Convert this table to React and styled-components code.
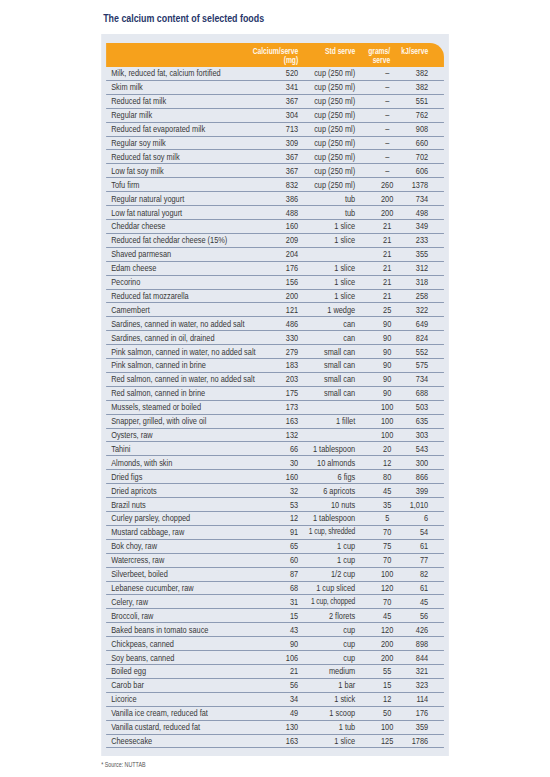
import React from "react";
import styled, { createGlobalStyle } from "styled-components";

/* The reference is set in a condensed grotesque; the installed Liberation Sans
   is condensed to Arial-Narrow proportions by scaling the sheet horizontally.
   All horizontal sizes below are given in the unscaled space (x / 0.82). */
const SX = 0.82;
const u = (px) => `${(px / SX).toFixed(2)}px`;

const Global = createGlobalStyle`
  html, body { margin: 0; padding: 0; background: #ffffff; }
  body { font-family: "Liberation Sans", Arial, sans-serif; overflow: hidden; }
`;

const Page = styled.div`
  width: ${u(348)};
  margin: 0 auto;
  padding-top: 12px;
  font-family: "Liberation Sans", Arial, sans-serif;
  transform: scaleX(${SX});
  transform-origin: 50% 0;
`;

const Title = styled.h1`
  margin: 0 0 10px ${u(2)};
  font-size: 10.8px;
  line-height: 12px;
  font-weight: 700;
  color: #27366a;
  white-space: nowrap;
`;

const Panel = styled.div`
  background: #e5e9f0;
  padding: 9px ${u(5)} 8px ${u(5)};
`;

const Header = styled.div`
  display: flex;
  height: 24px;
  background: #f6a11c;
  border-top-right-radius: ${u(14)} 14px;
  color: #fff8ec;
  font-weight: 700;
  font-size: 8.2px;
  line-height: 9px;
`;

const Row = styled.div`
  display: flex;
  align-items: center;
  height: 13.92px;
  box-sizing: border-box;
  border-bottom: 1px solid #8d9bb4;
  color: #383838;
  font-size: 9px;
  line-height: 10px;
  white-space: nowrap;
`;

const Cell = styled.div`
  display: flex;
  flex: ${(p) => (p.$grow ? "1 1 0" : `0 0 ${u(p.$w)}`)};
  min-width: 0;
  box-sizing: border-box;
  justify-content: ${(p) =>
    p.$align === "left" ? "flex-start" : p.$align === "center" ? "center" : "flex-end"};
  text-align: ${(p) => p.$align || "right"};
  padding-left: ${(p) => u(p.$pl || 0)};
  padding-right: ${(p) => u(p.$pr || 0)};
  white-space: nowrap;
  font-size: ${(p) => (p.$small ? "8.2px" : "inherit")};
  letter-spacing: ${(p) => (p.$small ? "-0.15px" : "normal")};
`;

const HeadCell = styled(Cell)`
  flex-direction: column;
  justify-content: flex-start;
  align-items: ${(p) => (p.$align === "left" ? "flex-start" : "flex-end")};
  padding-top: 3.5px;
`;

const Footnote = styled.div`
  margin-top: 5px;
  font-size: 6.5px;
  line-height: 8px;
  color: #555;
  white-space: nowrap;
`;

const COLS = { cal: 47, std: 57, grams: 64, kj: 25 };

const data = [
  ["Milk, reduced fat, calcium fortified", "520", "cup (250 ml)", "–", "382"],
  ["Skim milk", "341", "cup (250 ml)", "–", "382"],
  ["Reduced fat milk", "367", "cup (250 ml)", "–", "551"],
  ["Regular milk", "304", "cup (250 ml)", "–", "762"],
  ["Reduced fat evaporated milk", "713", "cup (250 ml)", "–", "908"],
  ["Regular soy milk", "309", "cup (250 ml)", "–", "660"],
  ["Reduced fat soy milk", "367", "cup (250 ml)", "–", "702"],
  ["Low fat soy milk", "367", "cup (250 ml)", "–", "606"],
  ["Tofu firm", "832", "cup (250 ml)", "260", "1378"],
  ["Regular natural yogurt", "386", "tub", "200", "734"],
  ["Low fat natural yogurt", "488", "tub", "200", "498"],
  ["Cheddar cheese", "160", "1 slice", "21", "349"],
  ["Reduced fat cheddar cheese (15%)", "209", "1 slice", "21", "233"],
  ["Shaved parmesan", "204", "", "21", "355"],
  ["Edam cheese", "176", "1 slice", "21", "312"],
  ["Pecorino", "156", "1 slice", "21", "318"],
  ["Reduced fat mozzarella", "200", "1 slice", "21", "258"],
  ["Camembert", "121", "1 wedge", "25", "322"],
  ["Sardines, canned in water, no added salt", "486", "can", "90", "649"],
  ["Sardines, canned in oil, drained", "330", "can", "90", "824"],
  ["Pink salmon, canned in water, no added salt", "279", "small can", "90", "552"],
  ["Pink salmon, canned in brine", "183", "small can", "90", "575"],
  ["Red salmon, canned in water, no added salt", "203", "small can", "90", "734"],
  ["Red salmon, canned in brine", "175", "small can", "90", "688"],
  ["Mussels, steamed or boiled", "173", "", "100", "503"],
  ["Snapper, grilled, with olive oil", "163", "1 fillet", "100", "635"],
  ["Oysters, raw", "132", "", "100", "303"],
  ["Tahini", "66", "1 tablespoon", "20", "543"],
  ["Almonds, with skin", "30", "10 almonds", "12", "300"],
  ["Dried figs", "160", "6 figs", "80", "866"],
  ["Dried apricots", "32", "6 apricots", "45", "399"],
  ["Brazil nuts", "53", "10 nuts", "35", "1,010"],
  ["Curley parsley, chopped", "12", "1 tablespoon", "5", "6"],
  ["Mustard cabbage, raw", "91", "1 cup, shredded", "70", "54", true],
  ["Bok choy, raw", "65", "1 cup", "75", "61"],
  ["Watercress, raw", "60", "1 cup", "70", "77"],
  ["Silverbeet, boiled", "87", "1/2 cup", "100", "82"],
  ["Lebanese cucumber, raw", "68", "1 cup sliced", "120", "61"],
  ["Celery, raw", "31", "1 cup, chopped", "70", "45", true],
  ["Broccoli, raw", "15", "2 florets", "45", "56"],
  ["Baked beans in tomato sauce", "43", "cup", "120", "426"],
  ["Chickpeas, canned", "90", "cup", "200", "898"],
  ["Soy beans, canned", "106", "cup", "200", "844"],
  ["Boiled egg", "21", "medium", "55", "321"],
  ["Carob bar", "56", "1 bar", "15", "323"],
  ["Licorice", "34", "1 stick", "12", "114"],
  ["Vanilla ice cream, reduced fat", "49", "1 scoop", "50", "176"],
  ["Vanilla custard, reduced fat", "130", "1 tub", "100", "359"],
  ["Cheesecake", "163", "1 slice", "125", "1786"],
];

export default function App() {
  return (
    <>
      <Global />
      <Page>
        <Title>The calcium content of selected foods</Title>
        <Panel>
          <Header>
            <HeadCell $grow $align="left" $pl={5} />
            <HeadCell $w={COLS.cal}>
              <span>Calcium/serve</span>
              <span>(mg)</span>
            </HeadCell>
            <HeadCell $w={COLS.std}>
              <span>Std serve</span>
            </HeadCell>
            <HeadCell $w={COLS.grams} $pr={29}>
              <span>grams/</span>
              <span>serve</span>
            </HeadCell>
            <HeadCell $w={COLS.kj} $pr={16}>
              <span>kJ/serve</span>
            </HeadCell>
          </Header>
          {data.map(([name, cal, std, grams, kj, small]) => (
            <Row key={name}>
              <Cell $grow $align="left" $pl={5}>{name}</Cell>
              <Cell $w={COLS.cal}>{cal}</Cell>
              <Cell $w={COLS.std} $small={small}>{std}</Cell>
              <Cell $w={COLS.grams} $align="center">{grams}</Cell>
              <Cell $w={COLS.kj} $pr={16}>{kj}</Cell>
            </Row>
          ))}
        </Panel>
        <Footnote>* Source: NUTTAB</Footnote>
      </Page>
    </>
  );
}
